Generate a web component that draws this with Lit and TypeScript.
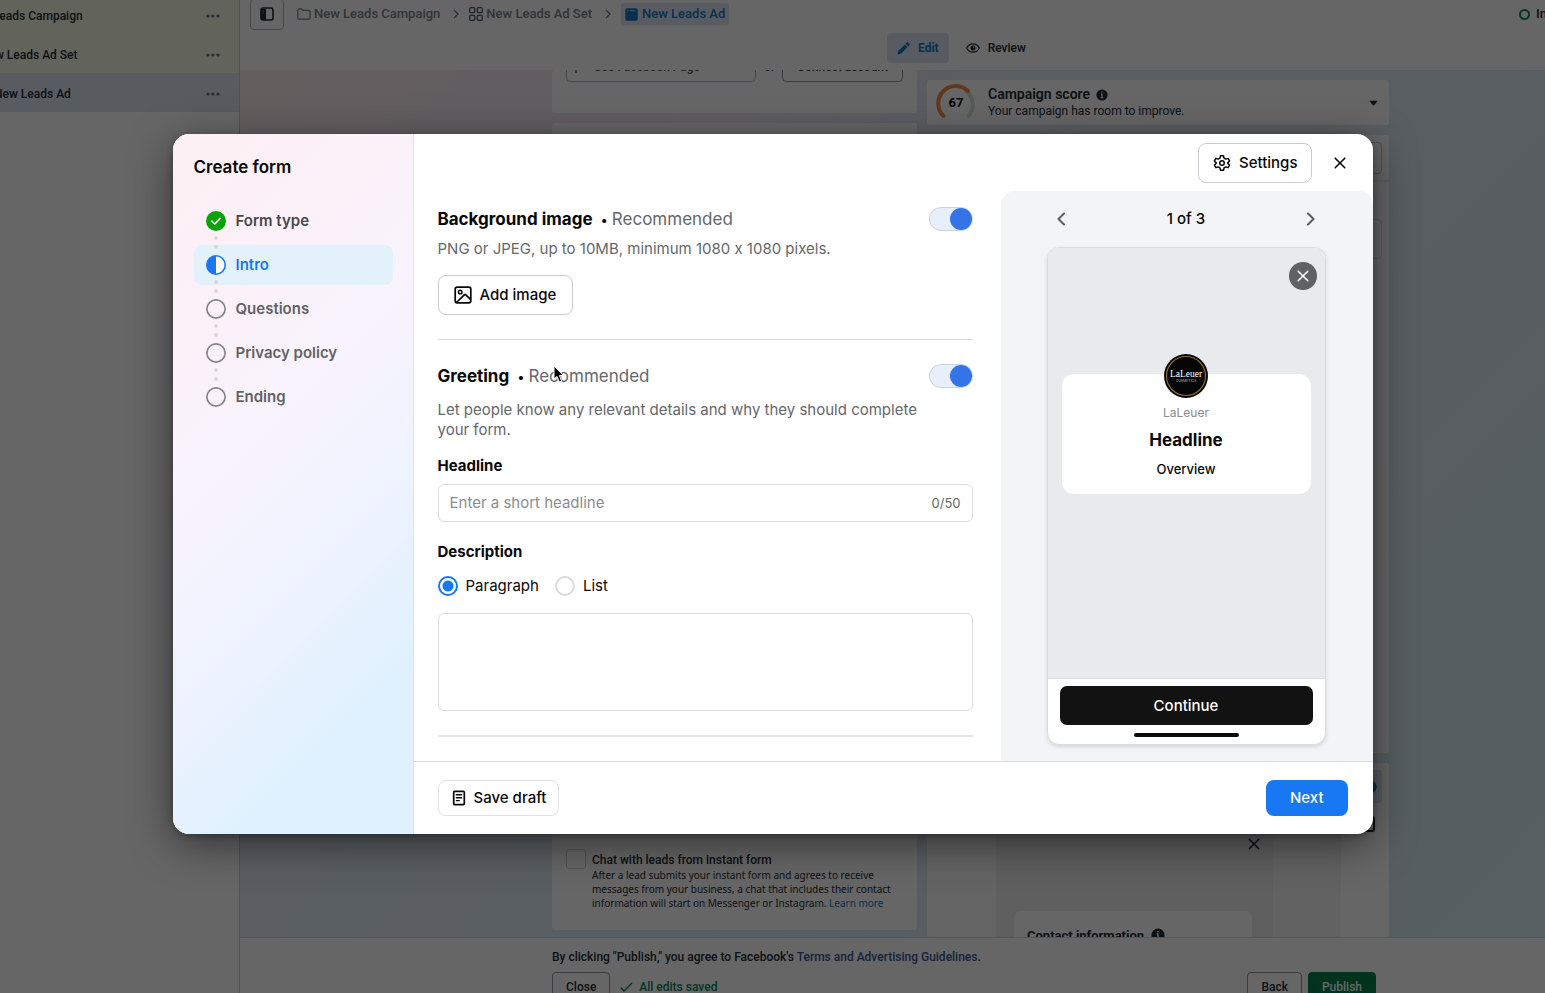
import { LitElement, html, css, svg } from "lit";
import { customElement, property, state } from "lit/decorators.js";
import { classMap } from "lit/directives/class-map.js";

const icons = {
  dots: svg`<svg width="14" height="4" viewBox="0 0 14 4" fill="currentColor"><circle cx="2" cy="2" r="1.6"/><circle cx="7" cy="2" r="1.6"/><circle cx="12" cy="2" r="1.6"/></svg>`,
  panel: svg`<svg width="14" height="14" viewBox="0 0 14 14"><rect x="1" y="1" width="12" height="12" rx="2" fill="none" stroke="currentColor" stroke-width="1.6"/><path d="M1 2h5v11H1z" fill="currentColor"/><path d="M2.6 4h1.4M2.6 6h1.4" stroke="#999" stroke-width=".8"/></svg>`,
  folder: svg`<svg width="14" height="14" viewBox="0 0 14 14" fill="none" stroke="currentColor" stroke-width="1.2" stroke-linejoin="round"><path d="M.8 3.2c0-.9.5-1.4 1.3-1.4h2.5l1.5 1.6h5.6c.9 0 1.4.5 1.4 1.4v6c0 .9-.5 1.4-1.4 1.4H2.1c-.8 0-1.3-.5-1.3-1.4z"/></svg>`,
  grid: svg`<svg width="14" height="14" viewBox="0 0 14 14" fill="none" stroke="currentColor" stroke-width="1.3"><rect x=".7" y=".7" width="5" height="5" rx="1"/><rect x="8.3" y=".7" width="5" height="5" rx="1"/><rect x=".7" y="8.3" width="5" height="5" rx="1"/><rect x="8.3" y="8.3" width="5" height="5" rx="1"/></svg>`,
  ad: svg`<svg width="13" height="13" viewBox="0 0 13 13"><rect x=".3" y=".3" width="12.4" height="12.4" rx="1.6" fill="currentColor"/><path d="M2.4 2.8h1.4M5 2.8h4.6" stroke="#dfeafa" stroke-width=".9"/></svg>`,
  crumb: svg`<svg width="6" height="10" viewBox="0 0 6 10" fill="none" stroke="currentColor" stroke-width="1.3"><path d="M1 1l4 4-4 4"/></svg>`,
  pencil: svg`<svg width="13" height="13" viewBox="0 0 13 13" fill="currentColor"><path d="M.4 12.6l.8-3.5 6.6-6.6 2.7 2.7-6.6 6.6zM8.6 1.7l1-1c.5-.5 1.200-.5 1.700 0l1 1c.5.5.5 1.200 0 1.700l-1 1z"/></svg>`,
  eye: svg`<svg width="14" height="12" viewBox="0 0 14 12"><path d="M.7 6C2 3.300 4.300 1.800 7 1.800S12 3.300 13.300 6C12 8.700 9.700 10.200 7 10.200S2 8.700.7 6z" fill="none" stroke="currentColor" stroke-width="1.2"/><circle cx="7" cy="6" r="2.500" fill="currentColor"/><circle cx="7.800" cy="5.200" r=".7" fill="#fff"/></svg>`,
  info: svg`<svg width="12" height="12" viewBox="0 0 12 12"><circle cx="6" cy="6" r="5.600" fill="currentColor"/><path d="M6 2.500v1.300M4.900 5.200H6v3.300M4.700 8.700h2.600" stroke="#fff" stroke-width="1.200" fill="none"/></svg>`,
  caret: svg`<svg width="9" height="6" viewBox="0 0 9 6" fill="currentColor"><path d="M.8.7h7.400c.3 0 .4.3.2.5L5 5.200c-.3.3-.7.3-1 0L.6 1.200C.4 1 .5.7.8.7z"/></svg>`,
  gauge: svg`<svg width="42" height="42" viewBox="0 0 42 42" fill="none" stroke-width="4" stroke-linecap="round"><path d="M31.500 9.500A17 17 0 0 1 33.500 34" stroke="#d3e0dd"/><path d="M8.500 34A17 17 0 0 1 33 9" stroke="#f58a4c"/></svg>`,
  close: svg`<svg width="12" height="12" viewBox="0 0 12 12" fill="none" stroke="currentColor" stroke-width="1.600" stroke-linecap="round"><path d="M1.200 1.200l9.600 9.600M10.800 1.200L1.200 10.800"/></svg>`,
  gear: svg`<svg width="18" height="18" viewBox="0 0 24 24" fill="none" stroke="currentColor" stroke-width="2" stroke-linejoin="round" stroke-linecap="round"><path d="M10 2.300h4l.7 3.100 2.400 1.400 3-1 2 3.500-2.300 2.200v1l2.300 2.200-2 3.500-3-1-2.400 1.400-.7 3.100h-4l-.7-3.100-2.400-1.400-3 1-2-3.500 2.300-2.200v-1L1.900 9.300l2-3.500 3 1 2.400-1.400z"/><circle cx="12" cy="12" r="3"/></svg>`,
  check: svg`<svg width="20" height="20" viewBox="0 0 20 20"><circle cx="10" cy="10" r="10" fill="#09a309"/><path d="M5.800 10.200l3 2.800 5.400-5.600" fill="none" stroke="#fff" stroke-width="1.600" stroke-linecap="round" stroke-linejoin="round"/></svg>`,
  half: svg`<svg width="20" height="20" viewBox="0 0 20 20"><circle cx="10" cy="10" r="9.200" fill="#fff" stroke="#1877f2" stroke-width="1.600"/><path d="M10 .8a9.200 9.200 0 0 0 0 18.400z" fill="#1877f2"/></svg>`,
  ring: svg`<svg width="20" height="20" viewBox="0 0 20 20"><circle cx="10" cy="10" r="9.100" fill="none" stroke="#85878a" stroke-width="1.700"/></svg>`,
  image: svg`<svg width="18" height="18" viewBox="0 0 18 18" fill="none" stroke="currentColor" stroke-width="1.700" stroke-linejoin="round"><rect x="1.200" y="1.200" width="15.600" height="15.600" rx="2"/><circle cx="6.200" cy="6" r="1.800" stroke-width="1.500"/><path d="M2.500 16.500l7.800-7.700c.5-.5 1-.5 1.500 0l5 4.900"/></svg>`,
  draft: svg`<svg width="14" height="16" viewBox="0 0 14 16" fill="none" stroke="currentColor" stroke-width="1.700"><rect x="1.700" y="1.400" width="10.600" height="13.200" rx="1"/><path d="M3.800 4.800h6.400M3.800 7.700h6.400M3.800 10.600h4" stroke-width="1.400"/></svg>`,
  prev: svg`<svg width="8" height="14" viewBox="0 0 8 14" fill="none" stroke="currentColor" stroke-width="2" stroke-linecap="round" stroke-linejoin="round"><path d="M7 1.500L1.500 7 7 12.500"/></svg>`,
  next: svg`<svg width="8" height="14" viewBox="0 0 8 14" fill="none" stroke="currentColor" stroke-width="2" stroke-linecap="round" stroke-linejoin="round"><path d="M1 1.500L6.500 7 1 12.500"/></svg>`,
  tick: svg`<svg width="13" height="10" viewBox="0 0 13 10" fill="none" stroke="currentColor" stroke-width="1.400"><path d="M.8 5.500L4 9l8-8"/></svg>`,
  flag: svg`<svg width="10" height="12" viewBox="0 0 10 12" fill="none" stroke="currentColor" stroke-width="1.300"><path d="M1 0v12M1 1h8v5H1"/></svg>`,
  cursor: svg`<svg width="13" height="19" viewBox="0 0 13 19"><path d="M1 1v13.200l3-2.800 2.300 5.600 2.400-1-2.300-5.400h4.300z" fill="#000" stroke="#fff" stroke-width="1"/></svg>`,
};

@customElement("ads-manager")
class AdsManager extends LitElement {
  static styles = css`
    :host {
      display: grid;
      grid-template-columns: 240px minmax(0, 1fr);
      height: 100%;
      background: #fff;
      color: #1c2b33;
      font: 400 12px/16px Roboto, sans-serif;
    }
    * { box-sizing: border-box; }
    svg { display: block; flex: none; }
    button { font: inherit; color: inherit; background: none; border: 0; padding: 0; margin: 0; }
    a { text-decoration: none; color: #1478be; }
    .tree { border-right: 1px solid #c9ced4; overflow: hidden; }
    .tree ul { list-style: none; margin: -5px 0 0; padding: 0; }
    .row {
      display: flex;
      align-items: center;
      height: 39px;
      padding: 2px 19px 0 0;
      background: #f5f9e4;
      white-space: nowrap;
      overflow: hidden;
    }
    .row.current { background: #dde6f2; }
    .row .name { flex: 1; font-weight: 500; }
    .row button { color: #5d6c7b; }
    .work { display: flex; flex-direction: column; min-width: 0; overflow: hidden; }
    .top { flex: none; height: 70px; }
    .crumbs { display: flex; align-items: center; height: 28px; padding-left: 10px; font-size: 13px; font-weight: 500; color: #76828e; white-space: nowrap; }
    .toggle { display: grid; place-items: center; width: 34px; height: 32px; border: 1px solid #b4bac2; border-radius: 4px; color: #1c2b33; margin-right: 13px; }
    .crumb { display: flex; align-items: center; gap: 3px; color: #76828e; }
    .crumb.dark svg { color: #465a69; }
    .crumb.here { gap: 4px; padding: 0 4px; height: 22px; border-radius: 3px; background: #dbe7f5; color: #1478be; }
    .sep { padding: 0 10px 0 13px; }
    .status { display: flex; align-items: center; gap: 6px; margin-left: auto; width: 26px; overflow: hidden; color: #1c2b33; }
    .status i { flex: none; width: 11px; height: 11px; border: 2px solid #0b8457; border-radius: 50%; }
    .tabs { display: flex; align-items: center; gap: 17px; margin-top: 5px; padding-left: 647px; }
    .tab { display: flex; align-items: center; gap: 8px; height: 30px; font-weight: 500; }
    .tab.on { padding: 0 10px; border-radius: 4px; background: #dbe7f5; color: #1478be; font-weight: 700; }
    .canvas {
      flex: 1;
      min-height: 0;
      overflow: hidden;
      display: grid;
      grid-template-columns: 365px 462px;
      gap: 10px;
      padding: 0 156px 0 312px;
      background: linear-gradient(135deg, #faeaec 0%, #f2e9f2 22%, #e4e7f4 32%, #dfeaf4 42%, #dbe9f2 70%, #d6edf2 100%);
    }
    .col { display: flex; flex-direction: column; gap: 10px; min-height: 0; }
    .card { background: #fff; border-radius: 3px; }
    .identity { display: flex; align-items: flex-start; height: 43px; padding: 0 14px; overflow: hidden; }
    .identity button { display: flex; align-items: center; gap: 9px; margin-top: -18px; height: 30px; border: 1px solid #b4bac2; border-radius: 4px; font-weight: 500; }
    .identity .page { flex: 1; padding-left: 8px; color: #465a69; }
    .identity .or { margin-top: -11px; padding: 0 7px 0 8px; }
    .identity .connect { padding: 0 14px; border-color: #8a949e; }
    .chat { flex: 1; display: flex; align-items: flex-end; gap: 6px; padding: 0 14px 20px; margin-bottom: 7px; }
    .chat input { flex: none; appearance: none; width: 20px; height: 20px; margin: 0 0 41px; border: 1px solid #ccd2d8; border-radius: 3px; }
    .chat label { display: block; font-weight: 500; }
    .chat p { margin: 0; font-family: "Noto Sans", sans-serif; font-size: 10px; line-height: 14px; }
    .score { display: flex; align-items: center; gap: 11px; height: 45px; margin-top: 10px; padding: 0 11px 0 8px; }
    .gauge { position: relative; width: 42px; height: 42px; }
    .gauge b { position: absolute; inset: 0; display: grid; place-items: center; font-size: 13px; color: #000; }
    .score .words { flex: 1; }
    .score h2 { display: flex; align-items: center; gap: 6px; margin: 0; font-size: 14px; line-height: 17px; font-weight: 600; }
    .rail { flex: 1; padding: 7px; background: linear-gradient(#fff 45px, #dcdcdc 46px, #fff 47px); }
    .rail i { display: block; margin-left: auto; width: 60px; border: 1px solid #c4c9cf; border-radius: 4px; height: 32px; }
    .rail i + i { margin-top: 45px; height: 40px; border-color: #e4e4e4; }
    .phone { flex: none; height: 174px; display: grid; grid-template-columns: 69px 277px 68px 48px; overflow: hidden; background: #f9f9f9; }
    .mid { background: #eeeeee; display: flex; flex-direction: column; padding: 75px 13px 0 18px; gap: 61px; }
    .mid .x { align-self: flex-end; color: #1c2b33; }
    .contact { display: flex; gap: 7px; margin-right: 8px; padding: 17px 13px; background: #fff; border-radius: 7px; font-size: 13px; font-weight: 700; white-space: nowrap; }
    .contact svg { width: 14px; height: 14px; }
    .dim { background: #f5f5f5; }
    .edge { background: #fff; padding: 7px 7px 0 0; }
    .edge b { display: block; height: 33px; border-radius: 3px; background: radial-gradient(circle at 29px 17px, #1478be 6px, #dbe7f5 7px); }
    .edge i { display: block; margin: 13px 7px 0 0; height: 16px; border: 2px solid #1c2b33; border-radius: 3px; }
    .foot { flex: none; height: 56px; border-top: 1px solid #d3d8dd; padding: 11px 169px 0 312px; overflow: hidden; }
    .foot p { margin: 0; font-weight: 500; }
    .foot p a { color: #385898; }
    .acts { display: flex; gap: 6px; margin-top: 7px; font-weight: 500; }
    .acts button { height: 30px; padding: 0 13px; border: 1px solid #8a949e; border-radius: 4px; }
    .acts .saved { display: flex; align-items: center; gap: 6px; margin: 0 auto 0 4px; color: #0b8457; }
    .acts .publish { background: #007f4d; border-color: #007f4d; color: #fff; }
  `;

  private rows = [
    { name: "New Leads Campaign", indent: -34 },
    { name: "New Leads Ad Set", indent: -20 },
    { name: "New Leads Ad", indent: -6 },
  ];

  render() {
    return html`
      <nav class="tree" aria-label="Campaign tree">
        <ul>
          ${this.rows.map((r, i) => html`
            <li class=${classMap({ row: true, current: i === 2 })}>
              <span class="name" style="margin-left:${r.indent}px">${r.name}</span>
              <button aria-label="More">${icons.dots}</button>
            </li>`)}
        </ul>
      </nav>
      <div class="work">
        <header class="top">
          <div class="crumbs">
            <button class="toggle" aria-label="Toggle panel">${icons.panel}</button>
            <a class="crumb" href="#">${icons.folder}New Leads Campaign</a>
            <span class="sep">${icons.crumb}</span>
            <a class="crumb dark" href="#">${icons.grid}New Leads Ad Set</a>
            <span class="sep">${icons.crumb}</span>
            <a class="crumb here" href="#">${icons.ad}New Leads Ad</a>
            <span class="status"><i></i>In draft</span>
          </div>
          <div class="tabs">
            <button class="tab on">${icons.pencil}Edit</button>
            <button class="tab">${icons.eye}Review</button>
          </div>
        </header>
        <div class="canvas">
          <div class="col">
            <section class="card identity">
              <button class="page">${icons.flag}Use Facebook Page</button>
              <span class="or">or</span>
              <button class="connect">Connect account</button>
            </section>
            <section class="card chat">
              <input id="chat" type="checkbox" />
              <div>
                <label for="chat">Chat with leads from instant form</label>
                <p>After a lead submits your instant form and agrees to receive messages from your business, a chat that includes their contact information will start on Messenger or Instagram. <a href="#">Learn more</a></p>
              </div>
            </section>
          </div>
          <div class="col">
            <section class="card score">
              <div class="gauge">${icons.gauge}<b>67</b></div>
              <div class="words">
                <h2>Campaign score ${icons.info}</h2>
                Your campaign has room to improve.
              </div>
              ${icons.caret}
            </section>
            <section class="card rail"><i></i><i></i></section>
            <section class="card phone">
              <div></div>
              <div class="mid">
                <button class="x" aria-label="Dismiss">${icons.close}</button>
                <div class="contact">Contact information ${icons.info}</div>
              </div>
              <div class="dim"></div>
              <div class="edge"><b></b><i></i></div>
            </section>
          </div>
        </div>
        <footer class="foot">
          <p>By clicking "Publish," you agree to Facebook's <a href="#">Terms and Advertising Guidelines</a>.</p>
          <div class="acts">
            <button>Close</button>
            <span class="saved">${icons.tick}All edits saved</span>
            <button>Back</button>
            <button class="publish">Publish</button>
          </div>
        </footer>
      </div>`;
  }
}

@customElement("form-preview")
class FormPreview extends LitElement {
  @property() name = "LaLeuer";
  static styles = css`
    :host { display: flex; flex-direction: column; gap: 16px; padding: 16px 47px 16px 46px; background: #f3f4f6; border-radius: 14px 14px 0 0; }
    * { box-sizing: border-box; }
    svg { display: block; }
    button { font: inherit; color: inherit; background: none; border: 0; padding: 0; margin: 0; }
    .pager { display: flex; align-items: center; justify-content: space-between; height: 24px; padding: 0 10px; font-size: 15px; font-weight: 500; color: #080809; }
    .pager button { color: #5a5c60; }
    .phone { flex: 1; display: flex; flex-direction: column; border: 1px solid #dadce0; border-radius: 12px; overflow: hidden; background: #fff; box-shadow: 0 2px 4px rgba(0, 0, 0, 0.12); }
    .screen { flex: 1; display: flex; flex-direction: column; gap: 84px; min-height: 431px; padding: 14px; background: #e9eaec; border-bottom: 1px solid #dadce0; }
    .x { align-self: flex-end; display: grid; place-items: center; width: 28px; height: 28px; margin-right: -6px; border-radius: 50%; background: #606164; color: #fff; }
    .card { display: flex; flex-direction: column; align-items: center; padding-bottom: 16px; background: #fff; border-radius: 12px; }
    .logo { margin: -20px 0 6px; }
    .name { font-size: 12px; line-height: 18px; color: #8a8c90; }
    h3 { margin: 6px 0 8px; font-size: 17px; line-height: 24px; font-weight: 700; }
    .over { margin: 0; font-size: 13px; line-height: 18px; font-weight: 500; }
    .bottom { display: flex; flex-direction: column; align-items: center; gap: 8px; padding: 7px 12px; }
    .go { width: 100%; height: 39px; border-radius: 7px; background: #121212; color: #fff; font-size: 15px; font-weight: 500; }
    .bar { width: 105px; height: 4px; border-radius: 2px; background: #0a0a0a; }
  `;
  render() {
    return html`
      <div class="pager">
        <button aria-label="Previous">${icons.prev}</button>
        <span>1 of 3</span>
        <button aria-label="Next">${icons.next}</button>
      </div>
      <div class="phone">
        <div class="screen">
          <button class="x" aria-label="Close preview">${icons.close}</button>
          <div class="card">
            <svg class="logo" width="44" height="44" viewBox="0 0 44 44">
              <circle cx="22" cy="22" r="22" fill="#050505" />
              <circle cx="22" cy="22" r="19.500" fill="none" stroke="#8a6a35" stroke-width="1.200" />
              <text x="22" y="23" text-anchor="middle" font-family="Liberation Serif, serif" font-size="9.500" fill="#fff">LaLeuer</text>
              <text x="22" y="27.500" text-anchor="middle" font-family="Inter, sans-serif" font-size="3.500" fill="#bbb">COSMETICS</text>
            </svg>
            <span class="name">${this.name}</span>
            <h3>Headline</h3>
            <p class="over">Overview</p>
          </div>
        </div>
        <div class="bottom">
          <button class="go">Continue</button>
          <div class="bar"></div>
        </div>
      </div>`;
  }
}

@customElement("create-form")
class CreateForm extends LitElement {
  @state() private mode = "paragraph";
  @state() private headline = "";

  private steps = [
    { label: "Form type", state: "done", icon: icons.check },
    { label: "Intro", state: "now", icon: icons.half },
    { label: "Questions", state: "todo", icon: icons.ring },
    { label: "Privacy policy", state: "todo", icon: icons.ring },
    { label: "Ending", state: "todo", icon: icons.ring },
  ];

  static styles = css`
    :host {
      position: relative;
      display: grid;
      grid-template-columns: 241px minmax(0, 1fr);
      width: min(1200px, 100%);
      border-radius: 16px;
      overflow: hidden;
      background: #fff;
      color: #080809;
      font: 400 15px/20px Inter, sans-serif;
      font-variant-ligatures: no-contextual;
      box-shadow: 0 10px 40px rgba(0, 0, 0, 0.5), 0 2px 6px rgba(0, 0, 0, 0.25);
    }
    * { box-sizing: border-box; }
    svg { display: block; flex: none; }
    button { font: inherit; color: inherit; background: none; border: 0; padding: 0; margin: 0; }
    h1, h2, p, ol { margin: 0; padding: 0; }
    .steps { padding: 21px 20px 0 21px; border-right: 1px solid #e0e2e8; background: linear-gradient(135deg, #fdf0f4 0%, #fcf0f6 15%, #f8f3fd 40%, #eef3fe 60%, #dff1fe 82%); }
    .steps h1 { font-size: 17px; line-height: 24px; font-weight: 600; }
    .steps ol { display: flex; flex-direction: column; gap: 4px; margin-top: 22px; list-style: none; }
    .step { position: relative; display: flex; align-items: center; gap: 10px; height: 40px; padding: 0 12px; border-radius: 8px; font-weight: 600; color: #606266; }
    .step.done { color: #46484c; }
    .step.now { background: #e3f1fb; color: #1877f2; }
    .link { position: absolute; z-index: 1; left: 20px; top: 35px; display: flex; flex-direction: column; gap: 5px; }
    .link i { width: 4px; height: 4px; border-radius: 50%; background: #d6d8dc; }
    .main { display: flex; flex-direction: column; min-width: 0; }
    .head { display: flex; align-items: center; justify-content: flex-end; gap: 12px; height: 57px; padding: 0 17px 0 24px; }
    .btn { display: inline-flex; align-items: center; gap: 8px; height: 40px; padding: 0 16px 0 15px; border: 1px solid #c9ccd1; border-radius: 8px; background: #fff; font-weight: 500; }
    .head .btn { padding: 0 13px 0 14px; }
    .x { display: grid; place-items: center; width: 32px; height: 32px; }
    .body { display: grid; grid-template-columns: minmax(0, 1fr) 372px; }
    .part { margin: 0 28px 0 24px; padding: 16px 0 24px; border-bottom: 1px solid #d9dbdf; }
    .part + .part { padding-top: 24px; border-bottom: 2px solid #e6e7ec; margin-bottom: 24px; }
    .title { display: flex; align-items: center; height: 24px; gap: 8px; font-size: 17px; }
    .title h2 { font-size: 17px; font-weight: 700; }
    .title span { flex: 1; color: #65676b; }
    .title span::before { content: "•"; margin-right: 4px; font-size: 13px; color: #080809; }
    .switch { appearance: none; display: flex; justify-content: flex-end; width: 44px; height: 24px; margin: 0; border: 1px solid #ccd2dc; border-radius: 12px; background: #e7eefc; }
    .switch::before { content: ""; width: 22px; height: 22px; border-radius: 50%; background: #3574e8; }
    .hint { margin: 8px 0 16px; padding-right: 40px; color: #65676b; }
    .hint.far { margin-top: 12px; }
    .lab { display: block; font-weight: 700; }
    .field { display: flex; align-items: center; height: 38px; margin: 8px 0 20px; padding: 0 11px; border: 1px solid #dadde1; border-radius: 6px; }
    .field input { flex: 1; min-width: 0; border: 0; outline: 0; padding: 0; background: none; font: inherit; color: inherit; }
    .field input::placeholder { color: #8a8d91; }
    .field span { font-size: 13px; color: #65676b; }
    .radios { display: flex; gap: 16px; margin: 14px 0 17px; }
    .radios label { display: flex; align-items: center; gap: 8px; }
    .radios input { appearance: none; width: 20px; height: 20px; margin: 0; border: 2px solid #d9dbdf; border-radius: 50%; background: #fff; }
    .radios input:checked { border-color: #1877f2; background: radial-gradient(circle, #1877f2 5px, #fff 6px); }
    textarea { display: block; width: 100%; height: 98px; border: 1px solid #dadde1; border-radius: 6px; resize: none; font: inherit; padding: 8px 11px; outline: 0; }
    .foot { display: flex; align-items: center; justify-content: space-between; height: 73px; padding: 0 25px 0 24px; border-top: 1px solid #d9dbdf; }
    .foot .btn { height: 36px; padding: 0 12px 0 13px; border-color: #dfe1e6; }
    .foot .go { height: 36px; padding: 0 24px; border-radius: 8px; background: #1877f2; color: #fff; font-weight: 500; }
    .cursor { position: absolute; left: 380px; top: 231px; pointer-events: none; }
  `;

  render() {
    return html`
      <nav class="steps">
        <h1>Create form</h1>
        <ol>
          ${this.steps.map((s, i) => html`
            <li class=${classMap({ step: true, [s.state]: true })}>
              ${s.icon}<span>${s.label}</span>
              ${i < this.steps.length - 1 ? html`<span class="link"><i></i><i></i></span>` : ""}
            </li>`)}
        </ol>
      </nav>
      <div class="main">
        <header class="head">
          <button class="btn">${icons.gear}Settings</button>
          <button class="x" aria-label="Close">${icons.close}</button>
        </header>
        <div class="body">
          <form @submit=${(e: Event) => e.preventDefault()}>
            <section class="part">
              <div class="title">
                <h2 id="bg">Background image</h2><span>Recommended</span>
                <input class="switch" type="checkbox" role="switch" aria-labelledby="bg" checked />
              </div>
              <p class="hint">PNG or JPEG, up to 10MB, minimum 1080 x 1080 pixels.</p>
              <button class="btn" type="button">${icons.image}Add image</button>
            </section>
            <section class="part">
              <div class="title">
                <h2 id="greet">Greeting</h2><span>Recommended</span>
                <input class="switch" type="checkbox" role="switch" aria-labelledby="greet" checked />
              </div>
              <p class="hint far">Let people know any relevant details and why they should complete your form.</p>
              <label class="lab" for="headline">Headline</label>
              <div class="field">
                <input id="headline" type="text" maxlength="50" placeholder="Enter a short headline"
                  .value=${this.headline} @input=${(e: Event) => (this.headline = (e.target as HTMLInputElement).value)} />
                <span>${this.headline.length}/50</span>
              </div>
              <label class="lab" for="description">Description</label>
              <div class="radios">
                ${["Paragraph", "List"].map((m) => html`
                  <label><input type="radio" name="mode" .checked=${this.mode === m.toLowerCase()}
                    @change=${() => (this.mode = m.toLowerCase())} />${m}</label>`)}
              </div>
              <textarea id="description"></textarea>
            </section>
          </form>
          <form-preview></form-preview>
        </div>
        <footer class="foot">
          <button class="btn">${icons.draft}Save draft</button>
          <button class="go">Next</button>
        </footer>
      </div>
      <span class="cursor">${icons.cursor}</span>`;
  }
}

@customElement("app-root")
class AppRoot extends LitElement {
  static styles = css`
    :host { position: relative; display: block; height: 100vh; overflow: hidden; }
    .veil { position: absolute; inset: 0; display: grid; place-items: center; padding: 0 24px 25px; background: rgba(0, 0, 0, 0.6); }
  `;
  render() {
    return html`
      <ads-manager></ads-manager>
      <div class="veil" role="dialog" aria-modal="true" aria-label="Create form">
        <create-form></create-form>
      </div>`;
  }
}
